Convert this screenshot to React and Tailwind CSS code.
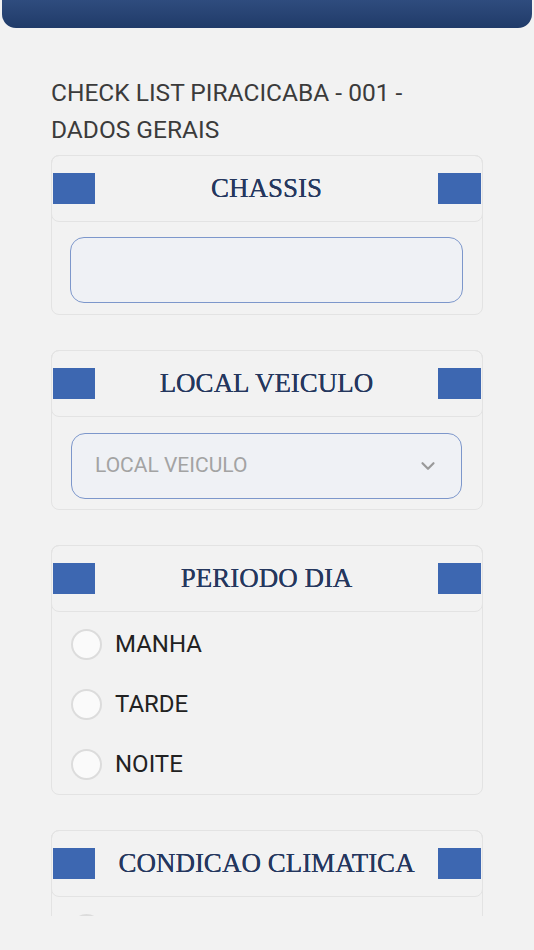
import React from "react";
import { ChevronDown } from "lucide-react";

function CardHeader({ title }) {
  return (
    <div className="relative -mx-px -mt-px h-[67px] rounded-lg border border-[#e3e3e3] flex items-center justify-between px-[1px]">
      <div className="w-[42px] h-[31px] bg-[#3d67b1]" />
      <div className="flex-1 text-center text-[27px] leading-none text-[#25375e] font-['Liberation_Serif',serif] [text-shadow:0_0_0.4px_#25375e]">
        {title}
      </div>
      <div className="w-[43px] h-[31px] bg-[#3d67b1]" />
    </div>
  );
}

function Card({ title, children }) {
  return (
    <div className="rounded-lg border border-[#e3e3e3] bg-[#f2f2f2]">
      <CardHeader title={title} />
      {children}
    </div>
  );
}

function Radio({ label }) {
  return (
    <div className="h-[60px] flex items-center pl-[19px]">
      <div className="w-[31px] h-[31px] rounded-full border-2 border-[#dcdcdc] bg-[#fafafa]" />
      <span className="ml-[13px] text-[24px] text-[#222] font-['Roboto',sans-serif]">{label}</span>
    </div>
  );
}

export default function App() {
  return (
    <div className="w-[534px] h-[950px] bg-[#f2f2f2] font-['Roboto',sans-serif] overflow-hidden">
      <div className="mx-[2px] h-[28px] rounded-b-[14px] bg-gradient-to-b from-[#2f4c7e] to-[#203b69]" />
      <div className="h-[888px] overflow-hidden px-[51px]">
        <div className="pt-[46px] w-[390px] text-[24.5px] leading-[37px] text-[#3b3b3b]">
          CHECK LIST PIRACICABA - 001 - DADOS GERAIS
        </div>
        <div className="mt-[7px] flex flex-col gap-[35px]">
          <Card title="CHASSIS">
            <div className="pt-[15px] pb-[11px] pl-[18px] pr-[19px]">
              <div className="h-[66px] rounded-[14px] border border-[#7d97cb] bg-[#eff1f5]" />
            </div>
          </Card>
          <Card title="LOCAL VEICULO">
            <div className="pt-[16px] pb-[10px] pl-[19px] pr-[20px]">
              <div className="h-[66px] rounded-[14px] border border-[#7d97cb] bg-[#eff1f5] flex items-center justify-between pl-[23px] pr-[22px]">
                <span className="text-[21px] text-[#a3a3a3]">LOCAL VEICULO</span>
                <ChevronDown size={22} strokeWidth={2.4} className="text-[#999]" />
              </div>
            </div>
          </Card>
          <Card title="PERIODO DIA">
            <div className="pt-[2px]">
              <Radio label="MANHA" />
              <Radio label="TARDE" />
              <Radio label="NOITE" />
            </div>
          </Card>
          <Card title="CONDICAO CLIMATICA">
            <div className="pt-[2px]">
              <Radio label="CHUVOSO" />
              <Radio label="ENSOLARADO" />
            </div>
          </Card>
        </div>
      </div>
    </div>
  );
}
